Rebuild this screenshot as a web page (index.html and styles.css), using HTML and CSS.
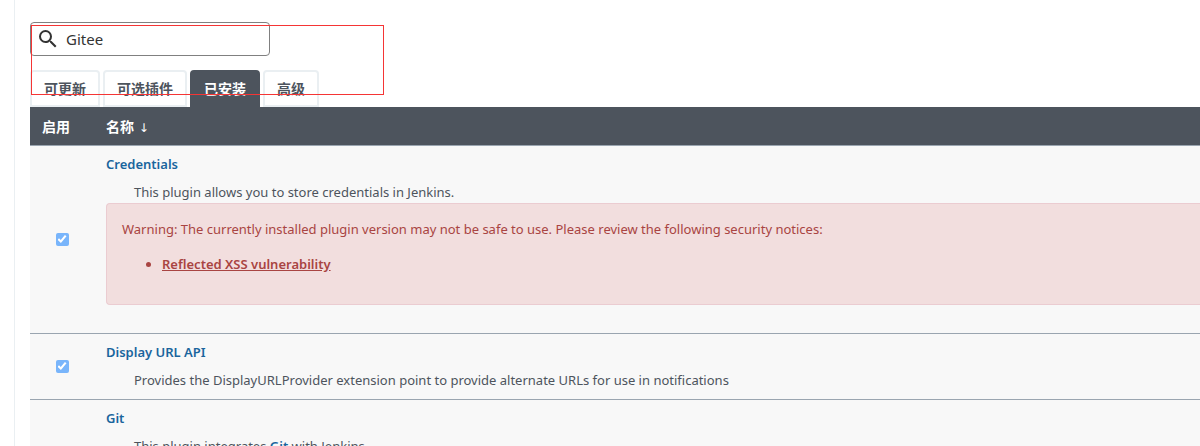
FILE: index.html
```html
<!DOCTYPE html>
<html lang="zh-CN">
<head>
<meta charset="utf-8">
<title>Jenkins 插件管理</title>
<link rel="stylesheet" href="styles.css">
</head>
<body>
<main class="panel">
  <div class="highlight"></div>
  <label class="search">
    <svg class="search-icon" viewBox="0 0 24 24" aria-hidden="true">
      <path d="M15.5 14h-.79l-.28-.27A6.47 6.47 0 0 0 16 9.500 6.500 6.500 0 1 0 9.500 16c1.610 0 3.090-.59 4.230-1.570l.27.28v.79l5 4.990L20.490 19l-4.990-5zm-6 0C7.010 14 5 11.990 5 9.500S7.010 5 9.500 5 14 7.010 14 9.500 11.990 14 9.500 14z"/>
    </svg>
    <input class="search-input" type="text" value="Gitee" aria-label="搜索">
  </label>
  <nav class="tabs">
    <a class="tab" href="#updates">可更新</a>
    <a class="tab" href="#available">可选插件</a>
    <a class="tab tab-active" href="#installed">已安装</a>
    <a class="tab" href="#advanced">高级</a>
  </nav>
  <table class="plugins">
    <thead>
      <tr>
        <th class="col-enabled">启用</th>
        <th>名称 <span class="sort">↓</span></th>
      </tr>
    </thead>
    <tbody>
      <tr>
        <td class="col-enabled"><input class="check" type="checkbox" checked aria-label="Credentials"></td>
        <td class="col-name">
          <div class="name"><a href="#credentials">Credentials</a></div>
          <div class="excerpt">This plugin allows you to store credentials in Jenkins.</div>
          <div class="alert">
            Warning: The currently installed plugin version may not be safe to use. Please review the following security notices:
            <ul class="notices">
              <li><a href="#xss">Reflected XSS vulnerability</a></li>
            </ul>
          </div>
        </td>
      </tr>
      <tr>
        <td class="col-enabled"><input class="check" type="checkbox" checked aria-label="Display URL API"></td>
        <td class="col-name">
          <div class="name"><a href="#display-url-api">Display URL API</a></div>
          <div class="excerpt">Provides the DisplayURLProvider extension point to provide alternate URLs for use in notifications</div>
        </td>
      </tr>
      <tr class="row-tall">
        <td class="col-enabled"><input class="check" type="checkbox" checked aria-label="Git"></td>
        <td class="col-name">
          <div class="name"><a href="#git">Git</a></div>
          <div class="excerpt">This plugin integrates <a href="#git-scm">Git</a> with Jenkins.</div>
        </td>
      </tr>
    </tbody>
  </table>
</main>
</body>
</html>
```
FILE: styles.css
```css
* {
  box-sizing: border-box;
}

html,
body {
  height: 100%;
}

body {
  margin: 0;
  overflow: hidden;
  background: #fff;
  color: #4d545d;
  font: 14px/21px "Noto Sans", "Noto Sans CJK SC", sans-serif;
}

a {
  color: #1a659d;
  font-weight: 600;
  text-decoration: none;
}

.panel {
  position: relative;
  min-height: 100%;
  margin-left: 14px;
  padding: 22px 0 0 15px;
  border-left: 1px solid #eaeff2;
}

.highlight {
  position: absolute;
  z-index: 1;
  top: 25px;
  left: 16px;
  width: 353px;
  height: 70px;
  border: 1px solid #f53535;
  pointer-events: none;
}

.search {
  display: flex;
  align-items: center;
  gap: 6px;
  width: 240px;
  height: 34px;
  padding: 0 5px;
  border: 1px solid #808080;
  border-radius: 4px;
}

.search-icon {
  flex: none;
  width: 24px;
  height: 24px;
  fill: #333;
}

.search-input {
  flex: 1;
  min-width: 0;
  padding: 0;
  border: 0;
  outline: 0;
  background: none;
  color: #333;
  font: 15px/24px "Noto Sans", sans-serif;
}

.tabs {
  display: flex;
  gap: 3px;
  margin-top: 14px;
}

.tab {
  height: 37px;
  padding: 6px 12px;
  border: 2px solid #eaeff2;
  border-radius: 4px 4px 0 0;
  background: #fff;
  color: #4d545d;
  font-weight: 700;
}

.tab-active {
  border-color: #4d545d;
  background: #4d545d;
  color: #fff;
}

.plugins {
  width: 100%;
  border-spacing: 0;
  background: #f8f8f8;
}

.plugins th {
  height: 39px;
  padding: 8px 12px;
  border-bottom: 1px solid #9aa5b0;
  background: #4d545d;
  color: #fff;
  font-weight: 700;
  text-align: left;
}

.plugins td {
  padding: 8px 12px;
  border-bottom: 1px solid #9aa5b0;
}

.plugins .col-enabled {
  width: 64px;
}

.plugins .col-name {
  padding-right: 0;
  font-size: 13px;
  vertical-align: top;
}

.plugins td.col-enabled {
  padding-bottom: 12px;
  text-align: center;
}

.row-tall {
  height: 188px;
}

.sort {
  padding-left: 1px;
  font: 12px/14px "DejaVu Sans", sans-serif;
}

.check {
  display: inline-grid;
  place-content: center;
  appearance: none;
  width: 13px;
  height: 13px;
  margin: 0;
  border-radius: 2px;
  background: #79b5fb;
  vertical-align: middle;
}

.check:checked::before {
  content: "";
  width: 9px;
  height: 9px;
  background: #fff;
  clip-path: polygon(0 55%, 17% 38%, 36% 58%, 82% 2%, 100% 18%, 38% 92%);
}

.name {
  margin-bottom: 7px;
}

.excerpt {
  padding-left: 28px;
}

.alert {
  margin-bottom: 20px;
  padding: 15px;
  border: 1px solid #ebccd1;
  border-right: 0;
  border-radius: 4px 0 0 4px;
  background: #f2dede;
  color: #a94442;
}

.alert a {
  color: #a94442;
  text-decoration: underline;
}

.notices {
  margin: 14px 0;
  padding-left: 40px;
}
```
